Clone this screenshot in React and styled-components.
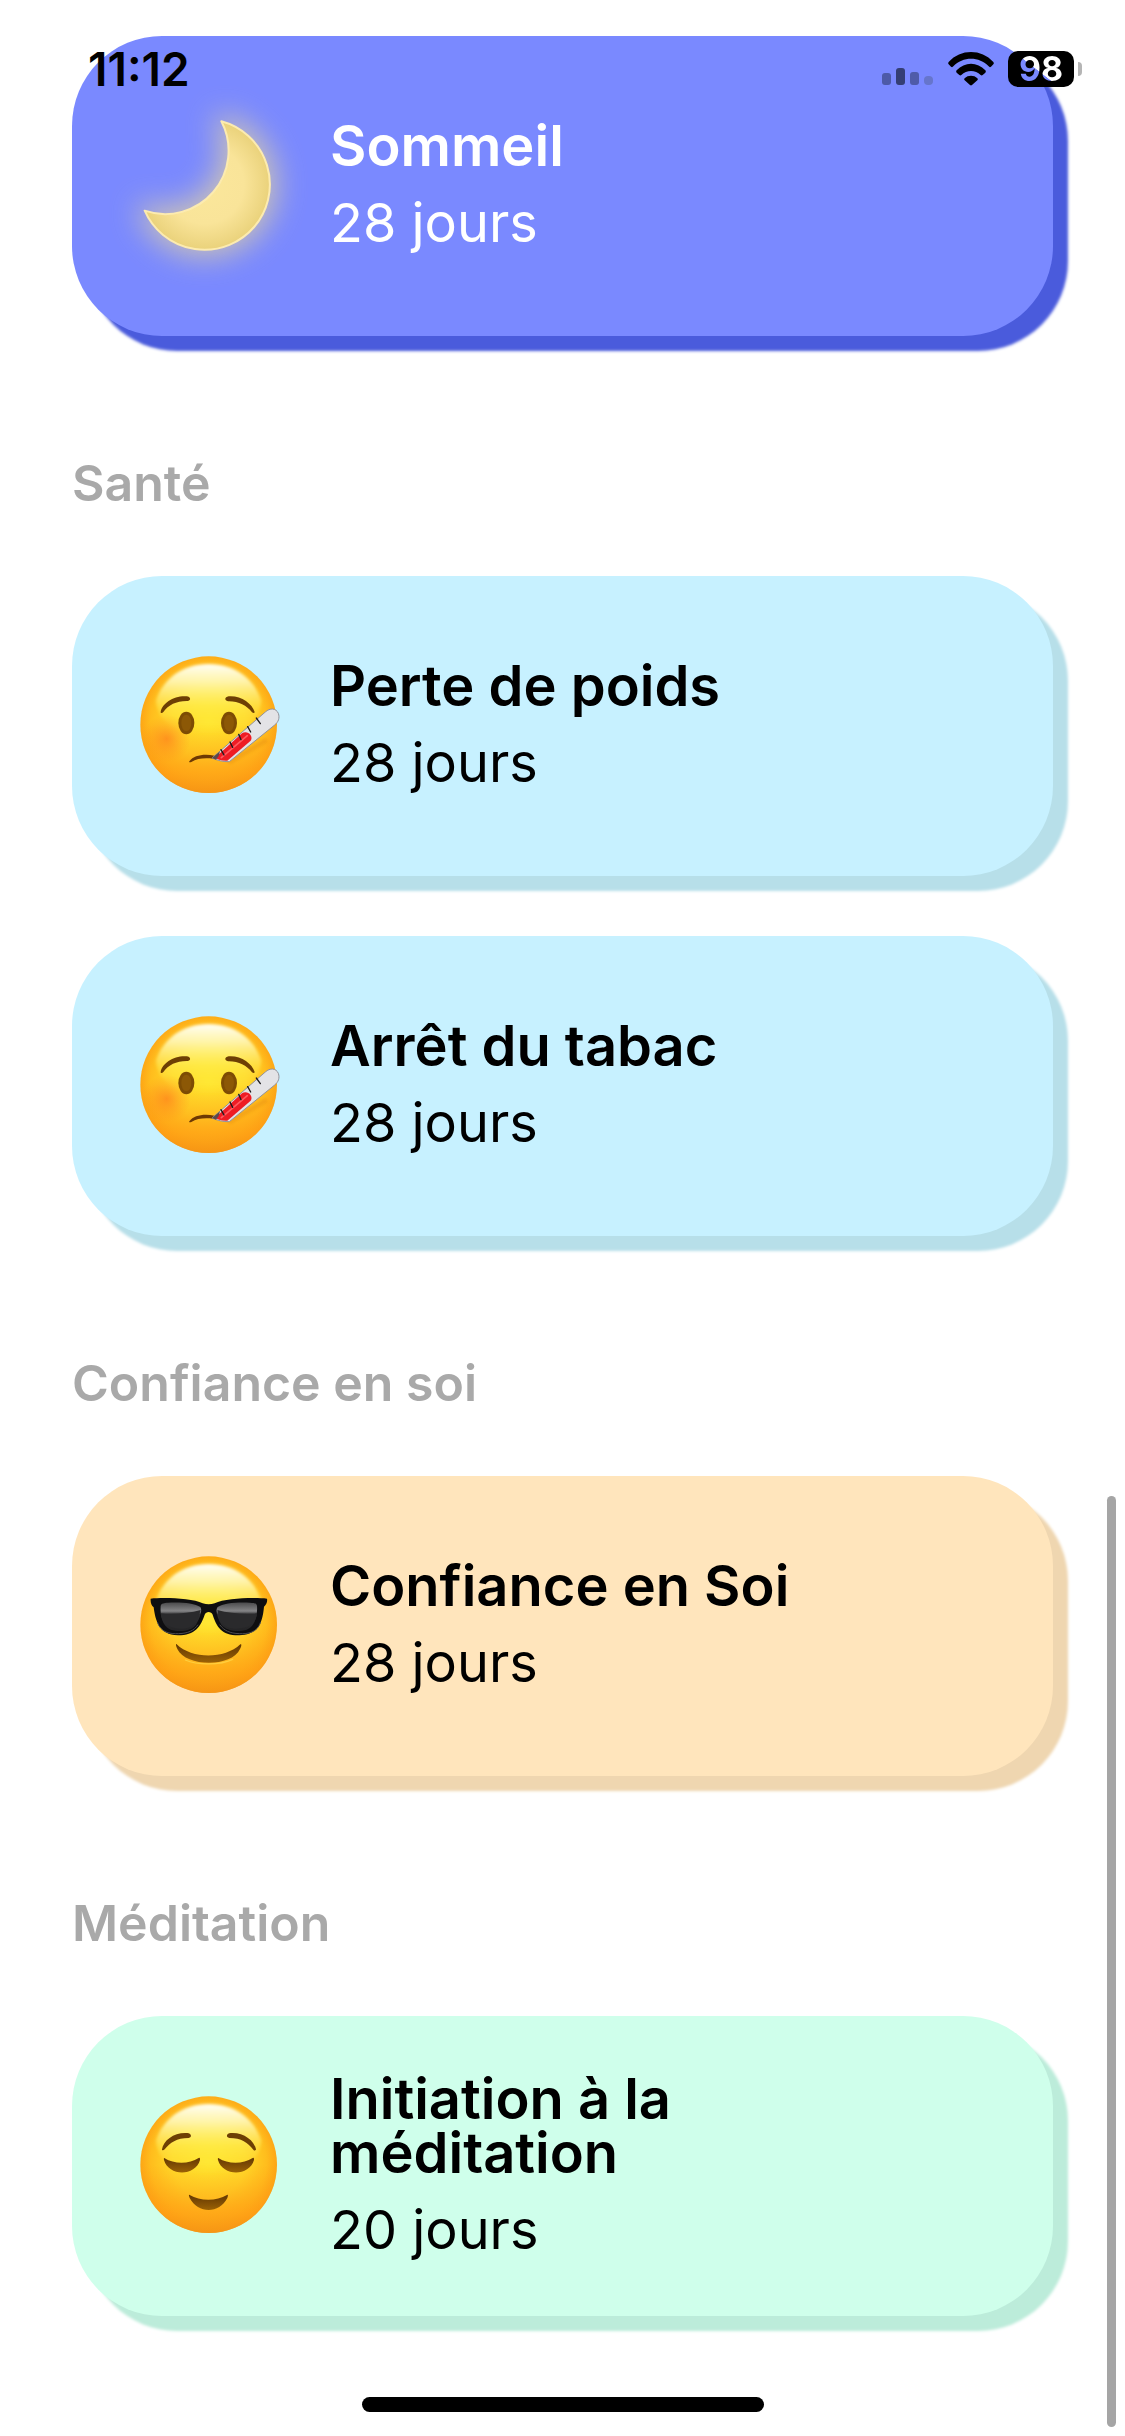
import React from 'react';
import styled, { createGlobalStyle } from 'styled-components';

const GlobalStyle = createGlobalStyle`
  * {
    box-sizing: border-box;
  }
  body {
    margin: 0;
    background: #fff;
    color: #000;
    font-family: Inter, 'Open Sans', sans-serif;
  }
`;

const Page = styled.div`
  position: relative;
  min-height: 100vh;
  padding: 36px 72px 120px;
`;

const StatusBar = styled.header`
  position: absolute;
  z-index: 1;
  top: 36px;
  left: 0;
  right: 0;
  display: flex;
  align-items: center;
  justify-content: space-between;
  height: 66px;
  padding: 0 43px 0 88px;
`;

const Time = styled.time`
  font-size: 46px;
  font-weight: 600;
`;

const StatusIcons = styled.div`
  display: flex;
  align-items: center;
  gap: 14px;
`;

const Battery = styled.div`
  display: flex;
  align-items: center;
  gap: 4px;
`;

const BatteryBody = styled.div`
  width: 66px;
  height: 36px;
  border-radius: 10px;
  background: #000;
  text-align: center;
`;

const BatteryLevel = styled.span`
  display: inline-block;
  font-size: 34px;
  line-height: 36px;
  font-weight: 700;
  color: transparent;
  background: linear-gradient(38deg, #7a89ff 44%, #fff 45%);
  background-clip: text;
`;

const BatteryTip = styled.div`
  width: 4px;
  height: 14px;
  border-radius: 0 6px 6px 0;
  background: #b5b5b5;
`;

const Section = styled.section`
  display: flex;
  flex-direction: column;
`;

const SectionTitle = styled.h2`
  margin: 117px 0 63px;
  font-size: 50px;
  line-height: 60px;
  font-weight: 600;
  color: #a9a9a9;
`;

const CardList = styled.ul`
  display: flex;
  flex-direction: column;
  gap: 60px;
  margin: 0;
  padding: 0;
  list-style: none;
`;

const Card = styled.button`
  display: flex;
  align-items: center;
  gap: 30px;
  width: 100%;
  min-height: 300px;
  padding: 0 150px 0 48px;
  border: none;
  border-radius: 90px;
  background: ${({ $theme }) => $theme.background};
  box-shadow: 15px 15px 3px ${({ $theme }) => $theme.shadow};
  color: ${({ $theme }) => $theme.text};
  font-family: inherit;
  text-align: left;
  cursor: pointer;
`;

const Emoji = styled.svg`
  flex: none;
  width: 180px;
  height: 180px;
  overflow: visible;
`;

const CardText = styled.span`
  display: flex;
  flex-direction: column;
  gap: 20px;
  max-width: 500px;
`;

const CardTitle = styled.span`
  font-size: 56px;
  line-height: 54px;
  font-weight: 600;
`;

const CardDuration = styled.span`
  font-size: 54px;
  line-height: 60px;
  font-weight: 400;
`;

const ScrollThumb = styled.div`
  position: absolute;
  right: 9px;
  bottom: 9px;
  width: 9px;
  height: 931px;
  border-radius: 5px;
  background: #a5a5a5;
`;

const HomeIndicator = styled.div`
  position: absolute;
  bottom: 24px;
  left: 50%;
  width: 402px;
  height: 15px;
  margin-left: -201px;
  border-radius: 8px;
  background: #000;
`;

const themes = {
  indigo: { background: '#7a89ff', shadow: '#4a5bdc', text: '#fff' },
  blue: { background: '#c7f1ff', shadow: '#b7dfe9', text: '#000' },
  orange: { background: '#ffe5bc', shadow: '#efd6b0', text: '#000' },
  green: { background: '#cfffeb', shadow: '#bcecda', text: '#000' },
};

// Gradients shared by every emoji on the page
const EmojiDefs = () => (
  <svg width="0" height="0" style={{ position: 'absolute' }} aria-hidden="true">
    <defs>
      <radialGradient id="skin" cx="50%" cy="48%" r="53%">
        <stop offset="0" stopColor="#ffe62e" />
        <stop offset="0.5" stopColor="#ffd829" />
        <stop offset="0.8" stopColor="#ffbd1d" />
        <stop offset="0.94" stopColor="#fda616" />
        <stop offset="1" stopColor="#ee9a22" />
      </radialGradient>
      <linearGradient id="chin" x1="0" y1="0" x2="0" y2="1">
        <stop offset="0.5" stopColor="#ff9d14" stopOpacity="0" />
        <stop offset="0.85" stopColor="#ff9d14" stopOpacity="0.7" />
        <stop offset="1" stopColor="#f59214" stopOpacity="0.75" />
      </linearGradient>
      <linearGradient id="shine" x1="0" y1="0" x2="0" y2="1">
        <stop offset="0" stopColor="#fffff6" />
        <stop offset="0.25" stopColor="#fffbc0" stopOpacity="0.85" />
        <stop offset="0.6" stopColor="#fff45a" stopOpacity="0.45" />
        <stop offset="1" stopColor="#ffe93a" stopOpacity="0" />
      </linearGradient>
      <radialGradient id="cheek">
        <stop offset="0" stopColor="#ff7a1c" stopOpacity="0.65" />
        <stop offset="1" stopColor="#ff8a1c" stopOpacity="0" />
      </radialGradient>
      <linearGradient id="lens" x1="0" y1="0" x2="0" y2="1">
        <stop offset="0" stopColor="#4a4a4c" />
        <stop offset="0.3" stopColor="#858587" />
        <stop offset="0.42" stopColor="#303032" />
        <stop offset="1" stopColor="#242426" />
      </linearGradient>
      <linearGradient id="mouth" x1="0" y1="0" x2="0" y2="1">
        <stop offset="0" stopColor="#633703" />
        <stop offset="1" stopColor="#9b6205" />
      </linearGradient>
      <radialGradient id="moonFill" cx="254" cy="283" r="196" gradientUnits="userSpaceOnUse">
        <stop offset="0" stopColor="#fbe79b" />
        <stop offset="0.6" stopColor="#f9e499" />
        <stop offset="1" stopColor="#ead27b" />
      </radialGradient>
      <filter id="moonGlow" x="-60%" y="-60%" width="220%" height="220%" colorInterpolationFilters="sRGB">
        <feGaussianBlur stdDeviation="44" />
      </filter>
      <filter id="soft" x="-20%" y="-20%" width="140%" height="140%">
        <feGaussianBlur stdDeviation="5" />
      </filter>
    </defs>
  </svg>
);

const Face = ({ children }) => (
  <Emoji viewBox="0 18 540 540" aria-hidden="true">
    <circle cx="266" cy="284" r="205" fill="url(#skin)" />
    <circle cx="266" cy="284" r="205" fill="url(#chin)" />
    <path
      d="M266 102C346 102 404 148 424 212C420 280 350 316 266 316C182 316 112 280 108 212C128 148 186 102 266 102Z"
      fill="url(#shine)"
      filter="url(#soft)"
    />
    {children}
  </Emoji>
);

const MOON = 'M304 94A196 196 0 1 1 74 362A190 190 0 0 0 304 94Z';

const Moon = () => (
  <Emoji viewBox="0 18 540 540" aria-hidden="true">
    <path d={MOON} fill="#e8d79c" stroke="#e8d79c" strokeWidth="40" strokeLinejoin="round" opacity="0.75" filter="url(#moonGlow)" />
    <path d={MOON} fill="url(#moonFill)" stroke="#fcebb0" strokeWidth="6" strokeLinejoin="round" />
  </Emoji>
);

const Sick = () => (
  <Face>
    <circle cx="140" cy="326" r="72" fill="url(#cheek)" />
    <path d="M122 246C126 220 162 196 200 199C212 200 214 211 204 213C170 212 146 224 130 246C127 250 121 250 122 246Z" fill="#6d3f04" />
    <path d="M404 246C396 220 362 196 326 199C313 201 313 212 324 214C354 213 380 226 396 247C400 250 404 250 404 246Z" fill="#6d3f04" />
    <ellipse cx="199" cy="279" rx="24" ry="34" fill="#7d4c04" />
    <ellipse cx="327" cy="279" rx="24" ry="34" fill="#7d4c04" />
    <ellipse cx="199" cy="279" rx="15" ry="25" fill="#8c5806" />
    <ellipse cx="327" cy="279" rx="15" ry="25" fill="#8c5806" />
    <path d="M208 394C222 376 250 371 284 377L280 386C252 383 232 385 214 396C209 398 206 397 208 394Z" fill="#6d3904" />
    <path d="M326 397L440 330" stroke="#e08108" strokeWidth="14" opacity="0.35" filter="url(#soft)" />
    <path d="M276 384L436 246C450 233 468 234 475 250C480 264 475 276 464 285L328 395C310 396 292 391 276 384Z" fill="#e3e3e6" stroke="#92929a" strokeWidth="3" />
    <path d="M284 384L366 310C380 299 402 316 392 332L322 392C308 393 296 389 284 384Z" fill="#ee1c24" />
    <path d="M304 383L382 317" stroke="#ff5a60" strokeWidth="5" strokeLinecap="round" />
    <path d="M276 384L300 364L296 378L288 389Z" fill="#5a4a4c" />
    <path d="M303 359L312 375M330 336L338 352M356 313L363 329M383 290L392 306M409 264L421 281" stroke="#1c1c1e" strokeWidth="4" strokeLinecap="round" />
  </Face>
);

const Cool = () => (
  <Face>
    <path d="M170 343C216 388 314 388 361 343C366 340 364 350 360 357C336 412 198 412 172 357C167 347 167 340 170 343Z" fill="url(#mouth)" />
    <path d="M196 390C232 406 300 406 338 388" fill="none" stroke="#ffd84a" strokeWidth="4" strokeLinecap="round" opacity="0.7" />
    <path
      d="M92 206C130 202 216 204 248 220C260 224 272 224 284 220C316 204 402 202 441 206C443 216 439 224 432 230C428 270 420 314 358 316C304 317 290 290 278 254C274 243 258 243 254 254C242 290 226 315 174 316C116 315 106 270 101 232C94 226 91 216 92 206Z"
      fill="#0e0e10"
    />
    <path d="M122 228C124 219 132 219 144 218C182 216 224 219 241 231C248 240 240 264 228 284C214 304 178 306 152 299C126 290 120 252 122 228Z" fill="url(#lens)" />
    <path d="M411 228C410 219 402 219 390 218C352 216 310 219 293 231C285 240 292 264 304 284C320 304 356 306 380 299C406 290 413 252 411 228Z" fill="url(#lens)" />
    <path d="M122 250C160 254 206 250 242 240L234 266C220 300 180 300 156 292C130 284 124 266 122 250Z" fill="#2a2a2c" />
    <path d="M411 250C374 254 328 250 292 240L298 266C314 300 352 300 376 292C402 284 410 266 411 250Z" fill="#2a2a2c" />
    <path d="M112 276C122 308 150 312 176 311C204 310 222 302 234 284M422 276C412 308 384 312 358 311C330 310 312 302 299 284" fill="none" stroke="#4b4b4e" strokeWidth="3" />
  </Face>
);

const Relieved = () => (
  <Face>
    <path d="M126 238C130 210 164 186 202 189C214 190 217 202 206 204C170 204 150 218 134 238C131 242 125 242 126 238Z" fill="#6d3f04" />
    <path d="M408 238C403 210 368 186 332 189C319 190 317 202 328 204C364 204 384 218 400 239C403 243 408 242 408 238Z" fill="#6d3f04" />
    <path d="M134 265C162 283 208 283 236 264C239 261 241 265 240 270C226 320 146 320 132 270C131 265 132 262 134 265Z" fill="url(#mouth)" />
    <path d="M296 265C324 283 370 283 398 264C401 261 403 265 402 270C388 320 308 320 294 270C293 265 294 262 296 265Z" fill="url(#mouth)" />
    <path d="M209 375C240 394 290 394 321 375C325 373 324 379 322 384C298 432 234 432 209 384C206 377 206 373 209 375Z" fill="url(#mouth)" />
  </Face>
);

const sections = [
  {
    programs: [{ title: 'Sommeil', days: 28, theme: themes.indigo, Icon: Moon }],
  },
  {
    title: 'Santé',
    programs: [
      { title: 'Perte de poids', days: 28, theme: themes.blue, Icon: Sick },
      { title: 'Arrêt du tabac', days: 28, theme: themes.blue, Icon: Sick },
    ],
  },
  {
    title: 'Confiance en soi',
    programs: [{ title: 'Confiance en Soi', days: 28, theme: themes.orange, Icon: Cool }],
  },
  {
    title: 'Méditation',
    programs: [{ title: 'Initiation à la méditation', days: 20, theme: themes.green, Icon: Relieved }],
  },
];

const ProgramCard = ({ title, days, theme, Icon }) => (
  <Card type="button" $theme={theme}>
    <Icon />
    <CardText>
      <CardTitle>{title}</CardTitle>
      <CardDuration>{days} jours</CardDuration>
    </CardText>
  </Card>
);

const SignalIcon = () => (
  <svg width="52" height="36" viewBox="0 0 52 36" aria-hidden="true">
    <rect x="0" y="22" width="9" height="12" rx="3" fill="#4d5aa8" />
    <rect x="14" y="17" width="9" height="17" rx="3" fill="#343e75" />
    <rect x="28" y="21" width="9" height="13" rx="3" fill="#4f5ba9" />
    <rect x="42" y="25" width="9" height="9" rx="4" fill="#6675cc" />
  </svg>
);

const WifiIcon = () => (
  <svg width="46" height="36" viewBox="0 0 138 108" aria-hidden="true">
    <path d="M2 33C38 -7 100 -7 136 33C138 36 138 38 136 40L129 47C127 49 124 49 122 46C94 16 44 16 16 46C14 49 11 49 9 47L2 40C0 38 0 36 2 33Z" />
    <path d="M26 58C50 32 88 32 112 58C114 60 114 63 112 65L104 72C102 74 100 74 98 72C82 56 56 56 40 72C38 74 36 74 34 72L26 65C24 63 24 60 26 58Z" />
    <path d="M50 82C60 72 78 72 88 82C90 84 90 86 88 88L72 102C70 104 68 104 66 102L50 88C48 86 48 84 50 82Z" />
  </svg>
);

const App = () => (
  <>
    <GlobalStyle />
    <EmojiDefs />
    <Page>
      <StatusBar>
        <Time>11:12</Time>
        <StatusIcons>
          <SignalIcon />
          <WifiIcon />
          <Battery>
            <BatteryBody>
              <BatteryLevel>98</BatteryLevel>
            </BatteryBody>
            <BatteryTip />
          </Battery>
        </StatusIcons>
      </StatusBar>
      <main>
        {sections.map((section, index) => (
          <Section key={index}>
            {section.title && <SectionTitle>{section.title}</SectionTitle>}
            <CardList>
              {section.programs.map((program) => (
                <li key={program.title}>
                  <ProgramCard {...program} />
                </li>
              ))}
            </CardList>
          </Section>
        ))}
      </main>
      <ScrollThumb />
      <HomeIndicator />
    </Page>
  </>
);

export default App;
